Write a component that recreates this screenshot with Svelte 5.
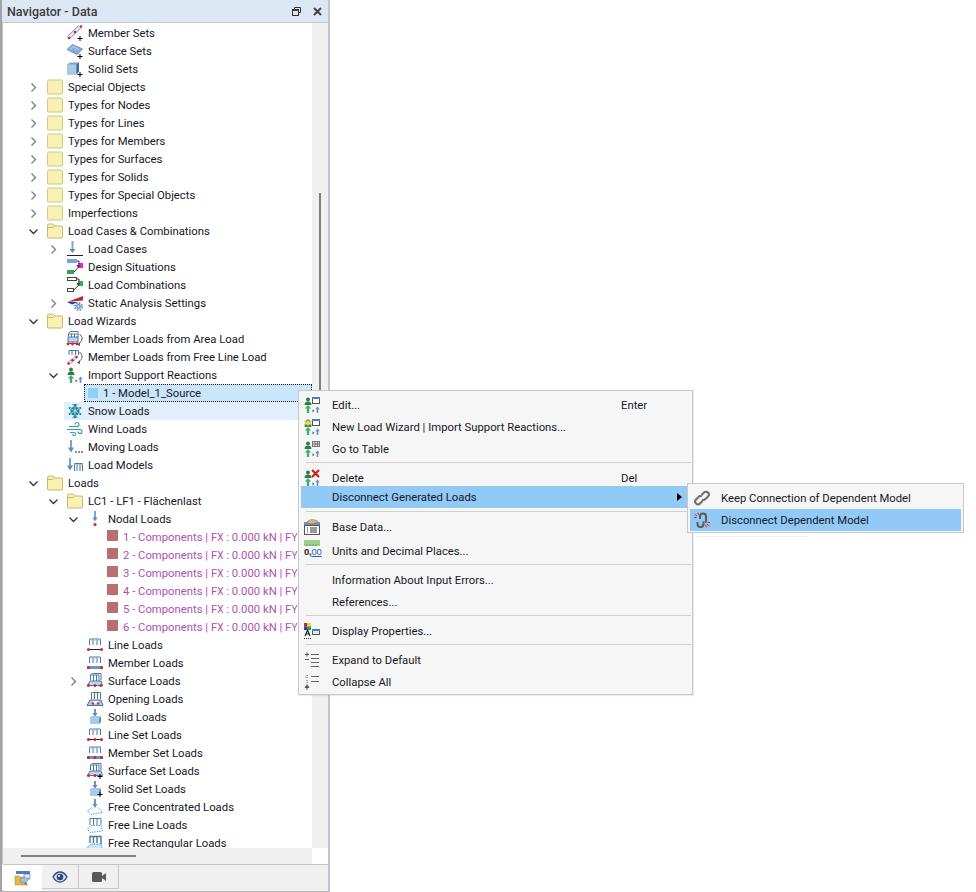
<script>
  const comps = [1, 2, 3, 4, 5, 6].map((n) => ({ d: 3, comp: n }))

  const rows = [
    { d: 1, icon: 'memberSet', label: 'Member Sets' },
    { d: 1, icon: 'surfaceSet', label: 'Surface Sets' },
    { d: 1, icon: 'solidSet', label: 'Solid Sets' },
    { d: 0, chev: 'r', icon: 'folder', label: 'Special Objects' },
    { d: 0, chev: 'r', icon: 'folder', label: 'Types for Nodes' },
    { d: 0, chev: 'r', icon: 'folder', label: 'Types for Lines' },
    { d: 0, chev: 'r', icon: 'folder', label: 'Types for Members' },
    { d: 0, chev: 'r', icon: 'folder', label: 'Types for Surfaces' },
    { d: 0, chev: 'r', icon: 'folder', label: 'Types for Solids' },
    { d: 0, chev: 'r', icon: 'folder', label: 'Types for Special Objects' },
    { d: 0, chev: 'r', icon: 'folder', label: 'Imperfections' },
    { d: 0, chev: 'd', icon: 'folderOpen', label: 'Load Cases & Combinations' },
    { d: 1, chev: 'r', icon: 'loadCases', label: 'Load Cases' },
    { d: 1, icon: 'designSit', label: 'Design Situations' },
    { d: 1, icon: 'loadCombo', label: 'Load Combinations' },
    { d: 1, chev: 'r', icon: 'staticAnalysis', label: 'Static Analysis Settings' },
    { d: 0, chev: 'd', icon: 'folderOpen', label: 'Load Wizards' },
    { d: 1, icon: 'areaWizard', label: 'Member Loads from Area Load' },
    { d: 1, icon: 'lineWizard', label: 'Member Loads from Free Line Load' },
    { d: 1, chev: 'd', icon: 'support', label: 'Import Support Reactions' },
    { d: 2, selected: true, label: '1 - Model_1_Source' },
    { d: 1, hover: true, icon: 'snow', label: 'Snow Loads' },
    { d: 1, icon: 'wind', label: 'Wind Loads' },
    { d: 1, icon: 'moving', label: 'Moving Loads' },
    { d: 1, icon: 'models', label: 'Load Models' },
    { d: 0, chev: 'd', icon: 'folderOpen', label: 'Loads' },
    { d: 1, chev: 'd', icon: 'folderOpen', label: 'LC1 - LF1 - Flächenlast' },
    { d: 2, chev: 'd', icon: 'nodal', label: 'Nodal Loads' },
    ...comps,
    { d: 2, icon: 'lineLoad', label: 'Line Loads' },
    { d: 2, icon: 'memberLoad', label: 'Member Loads' },
    { d: 2, chev: 'r', icon: 'surfaceLoad', label: 'Surface Loads' },
    { d: 2, icon: 'openingLoad', label: 'Opening Loads' },
    { d: 2, icon: 'solidLoad', label: 'Solid Loads' },
    { d: 2, icon: 'lineSetLoad', label: 'Line Set Loads' },
    { d: 2, icon: 'memberSetLoad', label: 'Member Set Loads' },
    { d: 2, icon: 'surfaceSetLoad', label: 'Surface Set Loads' },
    { d: 2, icon: 'solidSetLoad', label: 'Solid Set Loads' },
    { d: 2, icon: 'freeConc', label: 'Free Concentrated Loads' },
    { d: 2, icon: 'freeLine', label: 'Free Line Loads' },
    { d: 2, icon: 'freeRect', label: 'Free Rectangular Loads' }
  ]

  const menu = [
    { icon: 'mEdit', label: 'Edit...', key: 'Enter' },
    { icon: 'mNew', label: 'New Load Wizard | Import Support Reactions...' },
    { icon: 'mTable', label: 'Go to Table' },
    { sep: true },
    { icon: 'mDelete', label: 'Delete', key: 'Del', short: true },
    { label: 'Disconnect Generated Loads', active: true, arrow: true },
    { sep: true, wide: true },
    { icon: 'mBase', label: 'Base Data...', gapBelow: true },
    { icon: 'mUnits', label: 'Units and Decimal Places...' },
    { sep: true },
    { label: 'Information About Input Errors...' },
    { label: 'References...' },
    { sep: true },
    { icon: 'mDisplay', label: 'Display Properties...' },
    { sep: true },
    { icon: 'mExpand', label: 'Expand to Default' },
    { icon: 'mCollapse', label: 'Collapse All' }
  ]
</script>

{#snippet plus()}
  <path d="M10.500 13.500h5M13 11v5" stroke="#000" fill="none" />
{/snippet}

{#snippet comb(y = 2)}
  <path d="M2.500 {y + 6}V{y}h11V{y + 6}M6 {y}v6M10 {y}v6" stroke="#4f76a6" fill="none" />
  <path d="M2.500 {y + 1}h11" stroke="#a9c4e2" />
{/snippet}

{#snippet person()}
  <circle cx="4" cy="2.500" r="2" fill="#2b7f48" />
  <path d="M.5 8c0-2.500 1.500-3.500 3.500-3.500S7.500 5.500 7.500 8z" fill="#2b7f48" />
  <path d="M4 8 .8 11.500h2V16h2.400v-4.500h2z" fill="#42b06a" />
  <path d="M8.500 12.200l2 1.600-2 1.600z" fill="#55606b" />
  <path d="M13.500 9.500l-2.200 2.800h1.400V16h1.600v-3.700h1.400z" fill="#5a93c8" />
{/snippet}

{#snippet icon(name)}
  <svg class="ic" viewBox="0 0 16 16" aria-hidden="true">
    {#if name === 'folder'}
      <path d="M.5 2.500Q.5 1 2 1h12.500Q15.500 1 15.500 2.500v11.500q0 1-1 1H1.500q-1 0-1-1z" fill="#f9f0b4" stroke="#d0c883" />
    {:else if name === 'folderOpen'}
      <path d="M.5 3Q.5 1 2 1h4l2 2h6.500q1 0 1 1v10q0 1-1 1H1.500q-1 0-1-1z" fill="#f9f0b4" stroke="#c4ba70" />
      <path d="M1 4.500h5l1.500-1.500" fill="none" stroke="#c4ba70" />
    {:else if name === 'memberSet'}
      <path d="M1.500 12.500 13 1.500" stroke="#8ea4bd" stroke-width="4" />
      <path d="M1.500 12.500 13 1.500" stroke="#e6ecf3" stroke-width="2.400" />
      <circle cx="2" cy="13" r="1.300" fill="#d8232a" /><circle cx="8" cy="7" r="1.300" fill="#d8232a" /><circle cx="14" cy="1.500" r="1.300" fill="#d8232a" />
      {@render plus()}
    {:else if name === 'surfaceSet'}
      <path d="M0 6.500 5.500 1.500 15.500 6l-5.500 5.500z" fill="#85aedb" stroke="#6a91bd" />
      <path d="M3 6.500 6 3.500l6 3" fill="none" stroke="#c2d8ee" />
      {@render plus()}
    {:else if name === 'solidSet'}
      <path d="M0 3.500 3 1.500h9v9l-2.500 3H0z" fill="#7aa5d2" />
      <path d="M0 3.500h9.500V13.500H0z" fill="#a9c9e8" />
      <path d="M9.500 3.500 12 1.500v9l-2.500 3z" fill="#3f6a96" />
      {@render plus()}
    {:else if name === 'loadCases'}
      <path d="M5.500 0v8" stroke="#7aa3cf" stroke-width="2" />
      <path d="M2.500 8h6l-3 4z" fill="#5f8dc0" />
      <path d="M0 14.500h16" stroke="#222" />
    {:else if name === 'designSit' || name === 'loadCombo'}
      {#if name === 'designSit'}
        <rect x="0" y="0" width="10" height="4" fill="#7aa0e0" />
        <rect x="0" y="11" width="7" height="4" fill="#2fa84f" />
        <rect x="11" y="4" width="5" height="5" fill="#e81ee0" />
      {:else}
        <rect x=".5" y=".5" width="9" height="3" fill="#fff" stroke="#444" />
        <rect x=".5" y="11.500" width="6" height="3" fill="#fff" stroke="#444" />
        <rect x="11" y="4" width="5" height="5" fill="#2fb24f" />
      {/if}
      <path d="M10 2h2v3M7 13l4.500-5" fill="none" stroke="#333" />
      <path d="M9.500 6h3.500l-1.500 3z" fill="#333" />
    {:else if name === 'staticAnalysis'}
      <path d="M0 7 16 1v4.500z" fill="#c62828" />
      <path d="M0 7h11L5 9.500z" fill="#243f96" />
      <circle cx="11.500" cy="11.500" r="3.600" fill="none" stroke="#5d8fd0" stroke-width="1.800" stroke-dasharray="1.600 1.200" />
      <circle cx="11.500" cy="11.500" r="2.400" fill="#5d8fd0" /><circle cx="11.500" cy="11.500" r="1" fill="#fff" />
    {:else if name === 'areaWizard' || name === 'lineWizard'}
      {#if name === 'areaWizard'}
        <path d="M1.500 5V2.500l2-2h7.500v6M1.500 3h9M4.500 3v8M7.500 3v8" fill="none" stroke="#4f76a6" />
        <rect x="1" y="6" width="10" height="5" fill="#bcd4ec" stroke="#4f76a6" />
        <path d="M0 12.500h11" stroke="#c62828" />
        <circle cx="1" cy="13" r="1.400" fill="#d8232a" /><circle cx="5.500" cy="13" r="1.400" fill="#d8232a" /><circle cx="10" cy="13" r="1.400" fill="#d8232a" />
      {:else}
        <path d="M2 6V1.500h9.500V6M5 1.500V6M8.500 1.500V6" fill="none" stroke="#4f76a6" />
        <path d="M1 15 10 7.500" stroke="#a9b9cc" stroke-width="3.400" />
        <path d="M1 15 10 7.500" stroke="#e6ecf3" stroke-width="1.600" />
        <circle cx="1.500" cy="14.500" r="1.300" fill="#d8232a" /><circle cx="5.500" cy="11.300" r="1.300" fill="#d8232a" /><circle cx="9.500" cy="8" r="1.300" fill="#d8232a" />
      {/if}
      <path d="M12.500 3c3.500 3 3.500 7-1 10" fill="none" stroke="#555" />
      <path d="M9.800 13.500l3.200-2v3.500z" fill="#555" />
    {:else if name === 'support'}
      {@render person()}
    {:else if name === 'snow'}
      <circle cx="8" cy="8" r="4.500" fill="#1e7f97" />
      <path d="M8 1v14M1.900 4.500l12.200 7M1.900 11.500l12.200-7" stroke="#1e7f97" stroke-width="2" />
      <path d="M8 2.500v11M3.200 5.200l9.600 5.600M3.200 10.800l9.600-5.600" stroke="#cdeff5" stroke-width=".8" />
      <path d="M5.500 1 8 3.500 10.500 1M5.500 15 8 12.500 10.500 15" fill="none" stroke="#1e7f97" />
    {:else if name === 'wind'}
      <path d="M2 5.500h8a2 2 0 1 0-2-2M0 8.500h13a2 2 0 1 1-2 2M3 11.500h4a1.500 1.500 0 1 1-1.500 1.500" fill="none" stroke="#2a9cb0" stroke-width="1.100" />
    {:else if name === 'moving'}
      <path d="M4 1v8" stroke="#7aa3cf" stroke-width="2" />
      <path d="M1 8.500h6l-3 5z" fill="#5f8dc0" />
      <path d="M8 13h2M11 13h2M14 13h2" stroke="#6a6a6a" stroke-width="1.400" />
    {:else if name === 'models'}
      <path d="M3 1v8" stroke="#7aa3cf" stroke-width="2" />
      <path d="M0 8.500h6l-3 5z" fill="#5f8dc0" />
      <path d="M7.500 14V6.500h8V14M10 6.500V14M13 6.500V14" fill="none" stroke="#4f76a6" />
      <path d="M7.500 7.500h8" stroke="#a9c4e2" />
    {:else if name === 'nodal'}
      <path d="M8 0v7" stroke="#7aa3cf" stroke-width="2" />
      <path d="M5.500 6.500h5L8 10.500z" fill="#5f8dc0" />
      <circle cx="8" cy="13.500" r="1.600" fill="#d8232a" />
    {:else if name === 'lineLoad' || name === 'lineSetLoad'}
      {@render comb(2)}
      <path d="M0 12.500h16" stroke="#222" />
      <circle cx="1.500" cy="12.500" r="1.500" fill="#d8232a" /><circle cx="14.500" cy="12.500" r="1.500" fill="#d8232a" />
      {#if name === 'lineSetLoad'}<circle cx="8" cy="12.500" r="1.500" fill="#d8232a" />{/if}
    {:else if name === 'memberLoad' || name === 'memberSetLoad'}
      {@render comb(2)}
      <path d="M0 12.500h16" stroke="#6d95c4" stroke-width="3" />
      <circle cx="1.500" cy="12.500" r="1.500" fill="#d8232a" /><circle cx="14.500" cy="12.500" r="1.500" fill="#d8232a" />
      {#if name === 'memberSetLoad'}<circle cx="8" cy="12.500" r="1.500" fill="#d8232a" />{/if}
    {:else if name === 'surfaceLoad' || name === 'surfaceSetLoad'}
      <path d="M3.500 7V2l2-1.500h8.500V7M3.500 2h8.500v7M6.500 2v7M9.500 2v7" fill="none" stroke="#4f76a6" />
      <path d="M.5 12.500 3 8h11l1.500 4.500z" fill="#bcd4ec" stroke="#4f76a6" />
      <circle cx="1.500" cy="12.500" r="1.500" fill="#d8232a" /><circle cx="8" cy="12.500" r="1.500" fill="#d8232a" />
      {#if name === 'surfaceSetLoad'}{@render plus()}{:else}<circle cx="14" cy="12.500" r="1.500" fill="#d8232a" />{/if}
    {:else if name === 'openingLoad'}
      <path d="M4.500 8V1.500h9V8M7.500 1.500V8M10.500 1.500V8" fill="none" stroke="#4f76a6" />
      <path d="M0 14.500 3 9h11l2 5.500z" fill="#a9c9e8" stroke="#4f76a6" />
      <path d="M6 10h5l1 3H5z" fill="#fff" />
      <circle cx="6" cy="12.500" r="1.200" fill="#d8232a" /><circle cx="11" cy="12.500" r="1.200" fill="#d8232a" />
    {:else if name === 'solidLoad' || name === 'solidSetLoad'}
      <path d="M8 0v5" stroke="#6d95c4" stroke-width="2" />
      <path d="M5.500 4h5L8 8z" fill="#5f8dc0" />
      <path d="M3 8 5 7h8l-1 2v6H3z" fill="#a9c9e8" />
      <path d="M12 9l2-2v6l-2 2z" fill="#5f8dc0" />
      {#if name === 'solidSetLoad'}{@render plus()}{/if}
    {:else if name === 'freeConc'}
      <path d="M8 0v6" stroke="#6d95c4" stroke-width="2" />
      <path d="M5.500 5h5L8 9z" fill="#5f8dc0" />
      <path d="M.5 12 5 8.500M11 8.500l4.500 5L4 15.500.5 12" fill="none" stroke="#38a7df" stroke-dasharray="1.500 1" />
    {:else if name === 'freeLine'}
      <path d="M3 8V1.500h11V8M6.500 1.500V8M10 1.500V8" fill="none" stroke="#4f76a6" />
      <path d="M.5 12 4 8.500h10l1.500 5.500L3 15.500z" fill="none" stroke="#38a7df" stroke-dasharray="1.500 1" />
    {:else if name === 'freeRect'}
      <path d="M3 8V1.500h11V9M6.500 1.500V8M10 1.500V8" fill="none" stroke="#4f76a6" stroke-width="1.400" />
      <path d="M.5 12 4 9h10l1.500 5L3 15.500z" fill="#cfe4f6" stroke="#38a7df" stroke-dasharray="1.500 1" />
    {:else if name === 'mEdit' || name === 'mNew' || name === 'mTable' || name === 'mDelete'}
      {@render person()}
      {#if name === 'mEdit' || name === 'mNew'}
        <rect x="8.500" y=".5" width="7" height="6" fill="#fff" stroke="#555" />
        <rect x="8" y="0" width="8" height="2" fill="#4a7fc0" />
      {/if}
      {#if name === 'mNew'}
        <path d="M4 0 5 2.500 7.500 2 6 4 7.500 6 5 5.500 4 8 3 5.500.5 6 2 4 .5 2 3 2.500z" fill="#f4e61c" stroke="#888" stroke-width=".4" />
      {/if}
      {#if name === 'mTable'}
        <rect x="8" y="0" width="8" height="6" fill="#dcdcdc" />
        <path d="M8 .5h8M8 3h8M8 5.500h8M8.500 0v6M11 0v6M13.500 0v6M15.500 0v6" stroke="#666" stroke-width=".8" />
      {/if}
      {#if name === 'mDelete'}
        <path d="M8 0l7 7M15 0l-7 7" stroke="#e01818" stroke-width="2.200" />
      {/if}
    {:else if name === 'mBase'}
      <rect x=".5" y="6.500" width="15" height="9" fill="#fff" stroke="#555" />
      <rect x="0" y="3" width="16" height="3" fill="#6f8fb0" />
      <path d="M3 9h1M6 9h7M3 11h1M6 11h7M3 13h1M6 13h7" stroke="#333" />
      <path d="M3 3c1-2 5-3 8-2l3 1-2 2-6 1z" fill="#d9b58e" stroke="#8a6a4c" stroke-width=".5" />
    {:else if name === 'mUnits'}
      <rect x="0" y="-3" width="16" height="6" fill="#9fce8c" />
      <path d="M3 1v2M6 1v2M9 1v2M12 1v2" stroke="#6fa05e" />
    {:else if name === 'mDisplay'}
      <rect x="0" y="0" width="3.500" height="3.500" fill="#d82020" /><rect x="3.500" y="0" width="3.500" height="3.500" fill="#e8e020" />
      <rect x="0" y="3.500" width="3.500" height="3.500" fill="#2040d0" /><rect x="3.500" y="3.500" width="3.500" height="3.500" fill="#20a040" />
      <rect x="8.500" y="6.500" width="7" height="5" fill="#dfe9f4" stroke="#555" />
      <rect x="8" y="6" width="8" height="2" fill="#4a7fc0" />
      <path d="M1 13 3.500 7 6 13M2 11h3" fill="none" stroke="#222" stroke-width="1.200" />
      <path d="M0 15.500h7" stroke="#333" stroke-dasharray="1 1" />
    {:else if name === 'mExpand'}
      <path d="M7 2.500h8M7 6.500h8M7 10.500h8M7 14.500h8" stroke="#666" />
      <path d="M1 2.500h4M3 .5v4M1 7.500h4" stroke="#555" />
    {:else if name === 'mCollapse'}
      <path d="M7 2.500h8M7 7.500h8" stroke="#666" />
      <path d="M3 1v1M3 3v1M1 3h.5M3 6v1M3 8v1" stroke="#555" />
      <path d="M3 10 .5 14h5z" fill="#555" /><path d="M3 14v2" stroke="#555" />
    {:else if name === 'link'}
      <path d="M7.500 5 10 2.500a2.800 2.800 0 0 1 4 4L11.500 9a2.800 2.800 0 0 1-3.500.5M8.500 11 6 13.500a2.800 2.800 0 0 1-4-4L4.500 7a2.800 2.800 0 0 1 3.500-.5" fill="none" stroke="#6e6e6e" stroke-width="2" />
    {:else if name === 'unlink'}
      <path d="M6 7V4.500a3 3 0 0 1 6 0V9a2 2 0 0 1-1 1.500M9.500 9.500V12a3 3 0 0 1-6 0V10" fill="none" stroke="#5c5c5c" stroke-width="2" />
      <path d="M.5 2 3 4M4 .5l.5 2.500M0 5.500h2.500M12.500 12l3 2M11.500 13l1 2.500M13.500 10.500H16" stroke="#ec1c24" />
    {:else if name === 'tabData'}
      <rect x="1" y="1" width="14" height="3" fill="#4a7fc0" />
      <rect x="9" y="4" width="6" height="5" fill="#dfe9f4" stroke="#555" stroke-width=".5" />
      <path d="M0 6h4l1 1h5v8H0z" fill="#e6b93c" stroke="#a98a2b" stroke-width=".5" />
      <path d="M5 8h9l-3 5-2-1-3 1z" fill="#9fc1e6" stroke="#4a7fc0" stroke-width=".5" />
      <path d="M10 13l2 2" stroke="#c62828" stroke-width="1.500" />
    {:else if name === 'eye'}
      <path d="M1 8c2-3.500 4.500-5 7-5s5 1.500 7 5c-2 3.500-4.500 5-7 5s-5-1.500-7-5z" fill="#d8e2f2" stroke="#33487a" stroke-width="1.300" />
      <circle cx="8" cy="8" r="3.300" fill="#33487a" /><circle cx="7" cy="7" r="1" fill="#fff" />
    {:else if name === 'camera'}
      <rect x="1" y="3" width="10" height="10" rx="1.500" fill="#595959" />
      <path d="M11 7l4-3v8l-4-3z" fill="#595959" />
    {/if}
  </svg>
{/snippet}

<div class="page">
  <aside class="navigator">
    <header class="nav-head">
      <span class="nav-title">Navigator - Data</span>
      <svg class="head-btn" viewBox="0 0 9 9" aria-hidden="true">
        <path d="M2.500 2V.5h6v5H7" fill="none" stroke="#333" />
        <rect x=".5" y="2.500" width="6" height="6" fill="none" stroke="#333" />
        <path d="M.5 3.200h6" stroke="#333" stroke-width="1.400" />
      </svg>
      <svg class="head-btn close" viewBox="0 0 9 9" aria-hidden="true">
        <path d="M1 1l7 7M8 1 1 8" stroke="#444" stroke-width="2" />
      </svg>
    </header>

    <div class="tree-wrap">
      <div class="tree">
        {#each rows as row}
          <div class="row d{row.d}">
            <span class="chev">
              {#if row.chev === 'r'}
                <svg viewBox="0 0 9 9" aria-hidden="true"><path d="M2.500 .5l4 4-4 4" fill="none" stroke="#7d7d7d" stroke-width="1.300" /></svg>
              {:else if row.chev === 'd'}
                <svg viewBox="0 0 9 9" aria-hidden="true"><path d="M.5 2.500l4 4 4-4" fill="none" stroke="#333" stroke-width="1.300" /></svg>
              {/if}
            </span>
            <div class="item" class:item--selected={row.selected} class:item--hover={row.hover}>
              {#if row.comp}
                <span class="swatch"></span>
                <span class="label label--load">{row.comp} - Components | F<small>X</small> : 0.000 kN | F<small>Y</small></span>
              {:else if row.selected}
                <span class="swatch swatch--sel"></span>
                <span class="label">{row.label}</span>
              {:else}
                {@render icon(row.icon)}
                <span class="label">{row.label}</span>
              {/if}
            </div>
          </div>
        {/each}
      </div>
      <div class="vscroll"><span class="vthumb"></span></div>
    </div>

    <div class="hscroll-row">
      <div class="hscroll"><span class="hthumb"></span></div>
      <div class="corner"></div>
    </div>

    <nav class="tabs">
      <button class="tab tab--active">{@render icon('tabData')}</button>
      <button class="tab">{@render icon('eye')}</button>
      <button class="tab tab--wide">{@render icon('camera')}</button>
    </nav>
  </aside>

  <div class="menu">
    {#each menu as m}
      {#if m.sep}
        <div class="sep" class:sep--wide={m.wide}></div>
      {:else}
        <div class="mrow" class:mrow--active={m.active} class:mrow--short={m.short} class:mrow--gap={m.gapBelow}>
          <span class="mic">{#if m.icon}{@render icon(m.icon)}{/if}</span>
          <span class="mlabel">{m.label}</span>
          {#if m.arrow}
            <span class="mkey"><i class="tri"></i></span>
          {:else}
            <span class="mkey mkey--text">{m.key ?? ''}</span>
          {/if}
        </div>
      {/if}
    {/each}
    <span class="units-text">0,<u>00</u></span>
  </div>

  <div class="submenu">
    <div class="mrow sub">
      <span class="mic">{@render icon('link')}</span>
      <span class="mlabel">Keep Connection of Dependent Model</span>
    </div>
    <div class="mrow sub mrow--active">
      <span class="mic">{@render icon('unlink')}</span>
      <span class="mlabel">Disconnect Dependent Model</span>
    </div>
  </div>
  <div class="ghost"></div>
</div>

<style>
  :global(body) {
    background: #fff;
  }

  .page {
    width: 976px;
    height: 892px;
    overflow: hidden;
    position: relative;
    font-family: Roboto, "Noto Sans", sans-serif;
    font-size: 11.3px;
    color: #16161f;
  }

  .navigator {
    width: 330px;
    height: 892px;
    box-sizing: border-box;
    display: flex;
    flex-direction: column;
    border-left: 2px solid #a3a3a3;
    border-right: 2px solid #c4c4d0;
    border-bottom: 2px solid #b8b8b8;
    background: #fff;
  }

  .nav-head {
    height: 23px;
    flex-shrink: 0;
    box-sizing: border-box;
    display: flex;
    align-items: center;
    padding: 0 6px 0 5px;
    background: #dbe7f2;
    border-bottom: 1px solid #c4c8cc;
  }

  .nav-title {
    flex: 1;
    font-size: 12.500px;
    font-weight: 500;
    color: #3a3a3a;
  }

  .head-btn {
    width: 9px;
    height: 9px;
  }

  .close {
    margin-left: 12px;
  }

  .tree-wrap {
    height: 825px;
    flex-shrink: 0;
    display: flex;
    overflow: hidden;
    border-left: 1px solid #c8c8c8;
  }

  .tree {
    flex: 1;
    min-width: 0;
    overflow: hidden;
    padding-top: 1px;
  }

  .row {
    height: 18px;
    display: flex;
    align-items: center;
    white-space: nowrap;
  }

  .d0 { padding-left: 20px; }
  .d1 { padding-left: 40px; }
  .d2 { padding-left: 60px; }
  .d3 { padding-left: 80px; }

  .chev {
    width: 20px;
    flex-shrink: 0;
    display: flex;
    justify-content: center;
  }

  .chev svg {
    width: 9px;
    height: 9px;
  }

  .item {
    flex: 1;
    min-width: 0;
    height: 18px;
    box-sizing: border-box;
    margin-left: 1px;
    padding-left: 3px;
    display: flex;
    align-items: center;
  }

  .item--hover {
    background: #e1f0fc;
  }

  .item--selected {
    background: #cbe6fb;
    border: 1px dotted #1a1a1a;
  }

  .ic {
    width: 16px;
    height: 16px;
    flex-shrink: 0;
    margin-right: 5px;
    display: block;
    overflow: visible;
  }

  .label,
  .mlabel,
  .mkey--text {
    padding-top: 1px;
  }

  .swatch {
    width: 11px;
    height: 11px;
    flex-shrink: 0;
    margin-right: 5px;
    margin-top: -3px;
    background: #b86f72;
  }

  .swatch--sel {
    width: 10px;
    height: 10px;
    background: #8fd0f4;
    margin-top: 0;
  }

  .label--load {
    color: #b04fb2;
  }

  .label--load small {
    font-size: 10px;
  }

  .vscroll {
    width: 16px;
    flex-shrink: 0;
    background: #f0f0f0;
    position: relative;
  }

  .vthumb {
    position: absolute;
    left: 7px;
    top: 170px;
    width: 2px;
    height: 400px;
    background: #7f7f7f;
  }

  .hscroll-row {
    height: 16px;
    flex-shrink: 0;
    display: flex;
    border-left: 1px solid #c8c8c8;
  }

  .hscroll {
    flex: 1;
    background: #f0f0f0;
    position: relative;
  }

  .hthumb {
    position: absolute;
    left: 18px;
    top: 7px;
    width: 115px;
    height: 2px;
    background: #7f7f7f;
  }

  .corner {
    width: 16px;
  }

  .tabs {
    flex: 1;
    display: flex;
    align-items: flex-start;
    border-top: 1px solid #c4c4cc;
    margin-left: 1px;
    background: #f0f0f0;
  }

  .tab {
    width: 37px;
    height: 24px;
    padding: 0;
    display: flex;
    align-items: center;
    justify-content: center;
    box-sizing: border-box;
    background: #f0f0f0;
    border: 1px solid #c8c8d0;
    border-top: 0;
    border-left: 0;
  }

  .tab .ic {
    margin: 0;
  }

  .tab--active {
    width: 39px;
    height: 26px;
    background: #fff;
    border: 0;
  }

  .tab--wide {
    width: 40px;
  }

  .menu {
    position: absolute;
    left: 298px;
    top: 390px;
    width: 395px;
    height: 305px;
    box-sizing: border-box;
    padding: 3px 1px 0 2px;
    background: #f6f6f6;
    border: 1px solid #c8c8c8;
    box-shadow: 1px 1px 1px rgba(0, 0, 0, 0.08);
  }

  .mrow {
    height: 22px;
    display: flex;
    align-items: center;
    padding-left: 3px;
    white-space: nowrap;
  }

  .mrow--short {
    height: 19px;
    padding-top: 2px;
    box-sizing: border-box;
  }

  .mrow--gap {
    margin-bottom: 2px;
  }

  .mrow--active {
    background: #91c9f7;
  }

  .mic {
    width: 16px;
    height: 16px;
    flex-shrink: 0;
    margin-right: 12px;
  }

  .mlabel {
    flex: 1;
  }

  .mkey {
    width: 70px;
    flex-shrink: 0;
  }

  .tri {
    display: block;
    margin-left: 56px;
    width: 0;
    height: 0;
    border-left: 5px solid #000;
    border-top: 4px solid transparent;
    border-bottom: 4px solid transparent;
  }

  .sep {
    height: 1px;
    margin: 2px 0 4px 5px;
    background: #d0d0d0;
  }

  .sep--wide {
    margin-top: 3px;
  }

  .units-text {
    position: absolute;
    left: 5px;
    top: 155px;
    font-family: "Liberation Sans", sans-serif;
    font-size: 9.500px;
    font-weight: 700;
    line-height: 11px;
    letter-spacing: -0.2px;
    color: #222;
  }

  .units-text u {
    color: #2a5fd0;
    font-weight: 400;
  }

  .submenu {
    position: absolute;
    left: 687px;
    top: 483px;
    width: 277px;
    height: 50px;
    box-sizing: border-box;
    padding: 3px 2px 0;
    background: #f6f6f6;
    border: 1px solid #c8c8c8;
  }

  .sub .mic {
    margin-right: 11px;
  }

  .sub {
    padding-left: 4px;
  }

  .ghost {
    position: absolute;
    left: 697px;
    top: 536px;
    width: 111px;
    height: 2px;
    border-top: 1px solid #f0f0f0;
    border-left: 1px solid #f0f0f0;
  }
</style>
